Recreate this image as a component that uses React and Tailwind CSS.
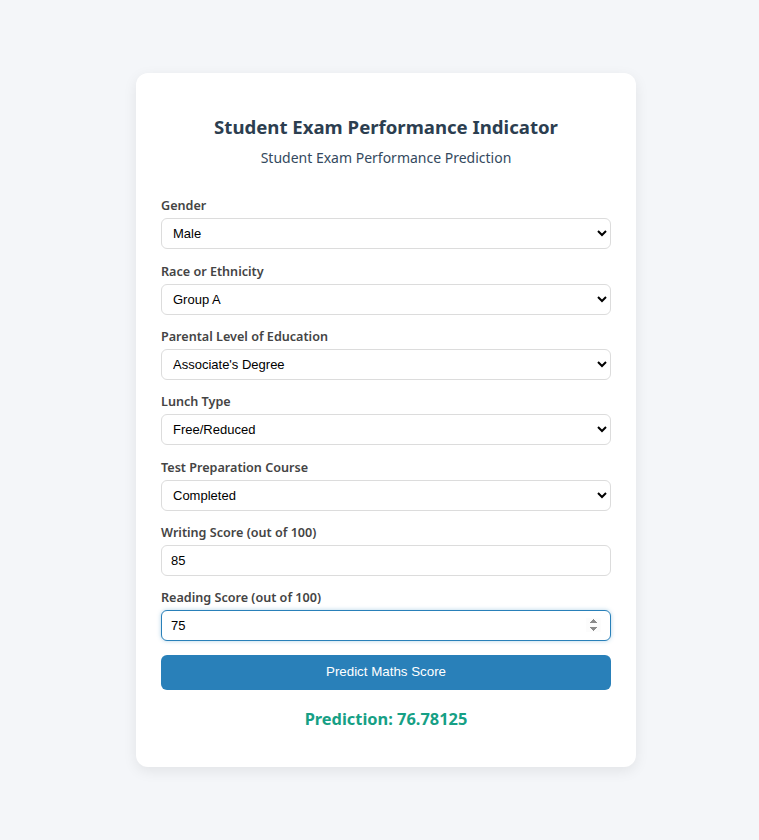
import React from "react";

function Field({ label, children }) {
  return (
    <div className="mb-[13.33px]">
      <label className="block text-[12.6px] leading-[17px] font-semibold text-[#444] mb-[4px] font-['Noto_Sans',sans-serif]">{label}</label>
      {children}
    </div>
  );
}

const selectCls = "block w-full h-[31px] rounded-[6px] border border-[#dcdcdc] bg-white px-[7px] text-[13px] text-black outline-none font-['Liberation_Sans',Arial,sans-serif]";
const inputCls = "block w-full h-[31px] rounded-[6px] border border-[#dcdcdc] bg-white px-[9px] text-[13px] text-black outline-none font-['Liberation_Sans',Arial,sans-serif]";

export default function App() {
  return (
    <div className="min-h-screen bg-[#f4f6f9] flex items-center justify-center pl-[13px]">
      <div className="w-[500px] bg-white rounded-[12px] shadow-[0_4px_14px_rgba(0,0,0,0.08)] px-[25px] pt-[41px] pb-[37px]">
        <h1 className="text-center text-[18.6px] leading-[25px] font-bold text-[#2c3e50] font-['Noto_Sans',sans-serif]">Student Exam Performance Indicator</h1>
        <p className="text-center text-[14px] leading-[20px] text-[#34495e] mt-[9px] mb-[29px] font-['Noto_Sans',sans-serif]">Student Exam Performance Prediction</p>
        <Field label="Gender">
          <select className={selectCls} defaultValue="male">
            <option value="male">Male</option>
            <option value="female">Female</option>
          </select>
        </Field>
        <Field label="Race or Ethnicity">
          <select className={selectCls} defaultValue="a">
            <option value="a">Group A</option>
            <option value="b">Group B</option>
          </select>
        </Field>
        <Field label="Parental Level of Education">
          <select className={selectCls} defaultValue="a">
            <option value="a">Associate's Degree</option>
            <option value="b">Bachelor's Degree</option>
          </select>
        </Field>
        <Field label="Lunch Type">
          <select className={selectCls} defaultValue="a">
            <option value="a">Free/Reduced</option>
            <option value="b">Standard</option>
          </select>
        </Field>
        <Field label="Test Preparation Course">
          <select className={selectCls} defaultValue="a">
            <option value="a">Completed</option>
            <option value="b">None</option>
          </select>
        </Field>
        <Field label="Writing Score (out of 100)">
          <input type="number" className={inputCls} defaultValue="85" />
        </Field>
        <Field label="Reading Score (out of 100)">
          <input type="number" autoFocus className={inputCls + " focus:border-[#2980b9] focus:shadow-[0_0_4px_rgba(41,128,185,0.35)]"} defaultValue="75" />
        </Field>
        <button className="block w-full h-[35px] rounded-[6px] bg-[#2980b9] text-white text-[13.33px] font-['Liberation_Sans',Arial,sans-serif]">Predict Maths Score</button>
        <div className="text-center text-[16.4px] leading-[23px] font-bold text-[#16a085] mt-[17px] font-['Noto_Sans',sans-serif]">Prediction: 76.78125</div>
      </div>
    </div>
  );
}
